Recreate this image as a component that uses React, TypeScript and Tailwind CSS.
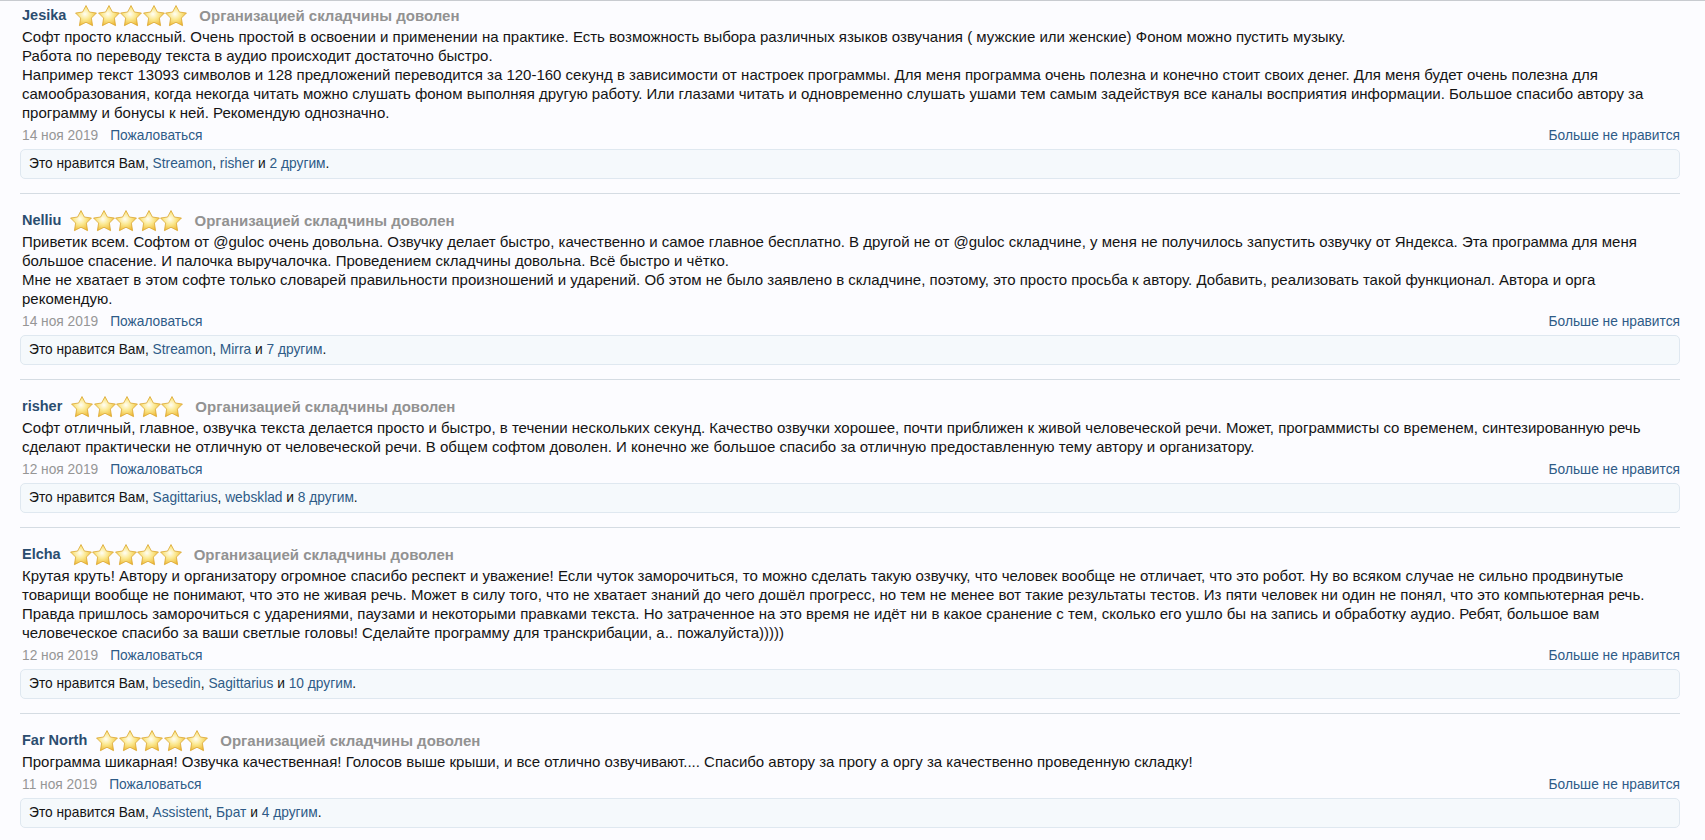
import React from 'react';

type Review = {
  author: string;
  text: string[];
  date: string;
  likes: string[];
  others: number;
};

const reviews: Review[] = [
  {
    author: 'Jesika',
    text: [
      'Софт просто классный. Очень простой в освоении и применении на практике. Есть возможность выбора различных языков озвучания ( мужские или женские) Фоном можно пустить музыку.',
      'Работа по переводу текста в аудио происходит достаточно быстро.',
      'Например текст 13093 символов и 128 предложений переводится за 120-160 секунд в зависимости от настроек программы. Для меня программа очень полезна и конечно стоит своих денег. Для меня будет очень полезна для самообразования, когда некогда читать можно слушать фоном выполняя другую работу. Или глазами читать и одновременно слушать ушами тем самым задействуя все каналы восприятия информации. Большое спасибо автору за программу и бонусы к ней. Рекомендую однозначно.',
    ],
    date: '14 ноя 2019',
    likes: ['Streamon', 'risher'],
    others: 2,
  },
  {
    author: 'Nelliu',
    text: [
      'Приветик всем. Софтом от @guloc очень довольна. Озвучку делает быстро, качественно и самое главное бесплатно. В другой не от @guloc складчине, у меня не получилось запустить озвучку от Яндекса. Эта программа для меня большое спасение. И палочка выручалочка. Проведением складчины довольна. Всё быстро и чётко.',
      'Мне не хватает в этом софте только словарей правильности произношений и ударений. Об этом не было заявлено в складчине, поэтому, это просто просьба к автору. Добавить, реализовать такой функционал. Автора и орга рекомендую.',
    ],
    date: '14 ноя 2019',
    likes: ['Streamon', 'Mirra'],
    others: 7,
  },
  {
    author: 'risher',
    text: [
      'Софт отличный, главное, озвучка текста делается просто и быстро, в течении нескольких секунд. Качество озвучки хорошее, почти приближен к живой человеческой речи. Может, программисты со временем, синтезированную речь сделают практически не отличную от человеческой речи. В общем софтом доволен. И конечно же большое спасибо за отличную предоставленную тему автору и организатору.',
    ],
    date: '12 ноя 2019',
    likes: ['Sagittarius', 'websklad'],
    others: 8,
  },
  {
    author: 'Elcha',
    text: [
      'Крутая круть! Автору и организатору огромное спасибо респект и уважение! Если чуток заморочиться, то можно сделать такую озвучку, что человек вообще не отличает, что это робот. Ну во всяком случае не сильно продвинутые товарищи вообще не понимают, что это не живая речь. Может в силу того, что не хватает знаний до чего дошёл прогресс, но тем не менее вот такие результаты тестов. Из пяти человек ни один не понял, что это компьютерная речь.',
      'Правда пришлось заморочиться с ударениями, паузами и некоторыми правками текста. Но затраченное на это время не идёт ни в какое сранение с тем, сколько его ушло бы на запись и обработку аудио. Ребят, большое вам человеческое спасибо за ваши светлые головы! Сделайте программу для транскрибации, а.. пожалуйста)))))',
    ],
    date: '12 ноя 2019',
    likes: ['besedin', 'Sagittarius'],
    others: 10,
  },
  {
    author: 'Far North',
    text: [
      'Программа шикарная! Озвучка качественная! Голосов выше крыши, и все отлично озвучивают.... Спасибо автору за прогу а оргу за качественно проведенную складку!',
    ],
    date: '11 ноя 2019',
    likes: ['Assistent', 'Брат'],
    others: 4,
  },
];

function Star({ id }: { id: string }) {
  return (
    <svg width="22" height="22" viewBox="0 0 20 20" className="shrink-0">
      <defs>
        <radialGradient id={id} cx="45%" cy="42%" r="62%">
          <stop offset="0%" stopColor="#fffef5" />
          <stop offset="45%" stopColor="#fbe88f" />
          <stop offset="100%" stopColor="#eeb733" />
        </radialGradient>
      </defs>
      <polygon
        points="10,0.5 13.1,6.4 19.5,7.3 14.9,11.9 16,18.8 10,15.7 4,18.8 5.1,11.9 0.5,7.3 6.9,6.4"
        fill={`url(#${id})`}
        stroke="#d9a42c"
        strokeWidth="0.7"
        strokeLinejoin="round"
      />
    </svg>
  );
}

function ReviewItem({ review, idx, first }: { review: Review; idx: number; first: boolean }) {
  return (
    <li className={`border-b border-[#d5dce3] pb-[14px] ${first ? 'pt-[4px]' : 'pt-[16px]'}`}>
      <div className="flex items-center h-[22px]">
        <a className="font-bold text-[14.5px] text-[#2b4d6f] pl-[2px]">{review.author}</a>
        <span className="flex items-center gap-[0.5px] ml-[9px]">
          {[0, 1, 2, 3, 4].map(i => <Star key={i} id={`st-${idx}-${i}`} />)}
        </span>
        <span className="font-bold text-[15px] text-[#929292] ml-[12px]">Организацией складчины доволен</span>
      </div>
      <div className="text-[15px] leading-[19px] text-[#141414] pl-[2px]">
        {review.text.map((p, i) => <div key={i}>{p}</div>)}
      </div>
      <div className="flex justify-between items-center text-[13.75px] leading-[19px] mt-[4px] pl-[2px]">
        <div className="flex gap-[12px]">
          <span className="text-[#969696]">{review.date}</span>
          <a className="text-[#2e5b87]">Пожаловаться</a>
        </div>
        <a className="text-[#2e5b87]">Больше не нравится</a>
      </div>
      <div className="mt-[4px] h-[30px] flex items-center px-[8px] bg-[#f5f9fc] border border-[#dfe8f0] rounded-[5px] text-[13.75px] text-[#141414]">
        <span>
          Это нравится Вам, <a className="text-[#2e5b87]">{review.likes[0]}</a>, <a className="text-[#2e5b87]">{review.likes[1]}</a> и <a className="text-[#2e5b87]">{review.others} другим</a>.
        </span>
      </div>
    </li>
  );
}

export default function App() {
  return (
    <div className="min-h-screen bg-[#fcfcff] border-t border-[#c8cbd0]" style={{ fontFamily: '"Liberation Sans", Arial, sans-serif' }}>
      <ol className="pl-[20px] pr-[25px]">
        {reviews.map((r, i) => (
          <ReviewItem key={r.author} review={r} idx={i} first={i === 0} />
        ))}
      </ol>
    </div>
  );
}
